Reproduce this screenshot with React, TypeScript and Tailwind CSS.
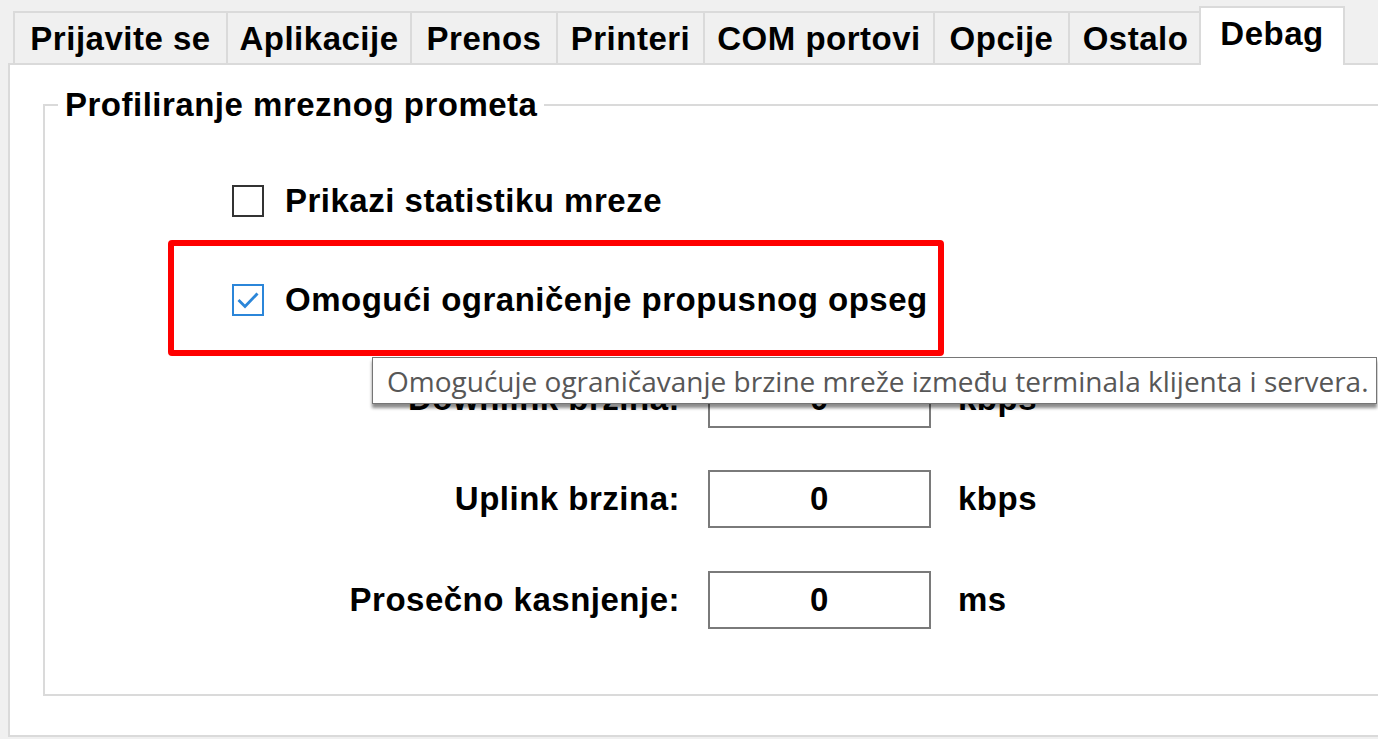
export default function App() {
  const tabs = [
    { label: "Prijavite se", cls: "w-[213px]" },
    { label: "Aplikacije", cls: "w-[184px]" },
    { label: "Prenos", cls: "w-[146px]" },
    { label: "Printeri", cls: "w-[147px]" },
    { label: "COM portovi", cls: "w-[230px]" },
    { label: "Opcije", cls: "w-[135px]" },
    { label: "Ostalo", cls: "w-[133px]" },
  ];
  const rows = [
    { label: "Downlink brzina:", unit: "kbps", mt: "mt-[50px]" },
    { label: "Uplink brzina:", unit: "kbps", mt: "mt-[42px]" },
    { label: "Prosečno kasnjenje:", unit: "ms", mt: "mt-[43px]" },
  ];
  return (
    <div className="relative w-[1378px] h-[739px] overflow-hidden bg-[#f0f0f0] text-black font-['Liberation_Sans',Arial,sans-serif] font-bold text-[33px] tracking-[0.5px]">
      {/* tab strip */}
      <div className="relative z-10 flex items-end h-[63px] pl-[13px]">
        {tabs.map((t) => (
          <div
            key={t.label}
            className={`${t.cls} h-[52px] shrink-0 border-l-2 border-t-2 border-[#dadada] bg-[#f0f0f0] flex items-center justify-center leading-none`}
          >
            {t.label}
          </div>
        ))}
        <div className="w-[146px] h-[59px] -mb-[2px] -ml-[2px] shrink-0 border-l-2 border-t-2 border-r-2 border-[#dadada] bg-white flex items-center justify-center pb-[7px] leading-none">
          Debag
        </div>
      </div>

      {/* page */}
      <div className="ml-[8px] w-[1400px] h-[674px] border-l-2 border-t-2 border-b-2 border-[#dadada] bg-white">
        <fieldset className="ml-[33px] mt-[21px] w-[1400px] h-[610px] border-2 border-[#dadada]">
          <legend className="ml-[13px] px-[7px] leading-[38px]">Profiliranje mreznog prometa</legend>

          <div className="ml-[187px] mt-[57px] flex items-center h-[40px] gap-[21px]">
            <span className="w-[32px] h-[32px] border-[2.5px] border-[#333333] bg-white shrink-0" />
            <span>Prikazi statistiku mreze</span>
          </div>

          <div className="ml-[187px] mt-[59px] flex items-center h-[40px] gap-[21px]">
            <span className="w-[32px] h-[32px] border-[2.5px] border-[#2b86d9] bg-white shrink-0 flex items-center justify-center">
              <svg width="24" height="24" viewBox="0 0 24 24">
                <path d="M2.5 12 L9 18.5 L21.5 5.5" fill="none" stroke="#2b86d9" strokeWidth="2.8" />
              </svg>
            </span>
            <span>Omogući ograničenje propusnog opseg</span>
          </div>

          {rows.map((r) => (
            <div key={r.label} className={`${r.mt} flex items-center h-[58px]`}>
              <span className="w-[635px] text-right shrink-0">{r.label}</span>
              <span className="ml-[28px] w-[223px] h-[58px] shrink-0 border-2 border-[#7a7a7a] flex items-center justify-center">0</span>
              <span className="ml-[27px]">{r.unit}</span>
            </div>
          ))}
        </fieldset>
      </div>

      {/* red highlight */}
      <div className="absolute left-[168px] top-[240px] w-[776px] h-[116px] border-[6px] border-[#ff0000] rounded-[4px]" />

      {/* tooltip */}
      <div className="absolute left-[372px] top-[357px] w-[1005px] h-[47px] border border-[#767676] bg-white shadow-[0_4px_3px_rgba(0,0,0,0.45)] flex items-center pl-[14px] font-['Open_Sans',sans-serif] font-normal tracking-normal text-[28px] text-[#575757] whitespace-nowrap">
        Omogućuje ograničavanje brzine mreže između terminala klijenta i servera.
      </div>
    </div>
  );
}
